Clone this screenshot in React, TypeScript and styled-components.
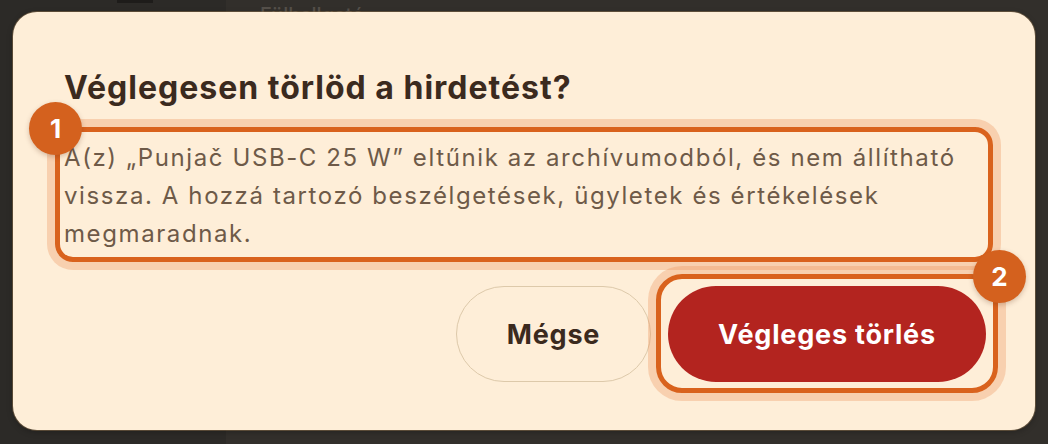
import React from "react";
import styled, { createGlobalStyle } from "styled-components";

const GlobalStyle = createGlobalStyle`
  * { box-sizing: border-box; }
  body {
    margin: 0;
    background: #302d29;
    font-family: Inter, "Noto Sans", sans-serif;
  }
`;

const Page = styled.div`
  position: relative;
  width: 1048px;
  height: 444px;
  overflow: hidden;
  display: grid;
  grid-template-columns: 226px 1fr;
  background: #322f2b;
`;

const Sidebar = styled.aside`
  background: #2c2a27;
  padding-left: 117px;
`;

const SidebarMark = styled.div`
  width: 36px;
  height: 3px;
  background: #1e1c1a;
`;

const Main = styled.main`
  padding: 3px 0 0 34px;
`;

const PageTitle = styled.h2`
  margin: 0;
  font-size: 20px;
  font-weight: 500;
  color: #55504a;
`;

const Overlay = styled.div`
  position: absolute;
  inset: 0;
  display: flex;
  padding: 12px 13px 14px 13px;
`;

const Dialog = styled.section`
  flex: 1;
  display: flex;
  flex-direction: column;
  background: #feeed8;
  border-radius: 24px;
  box-shadow: 0 0 0 1px rgba(150, 120, 80, 0.45), 0 2px 6px rgba(0, 0, 0, 0.25);
  padding: 58px 49px 48px 51px;
`;

const Title = styled.h1`
  margin: 0;
  font-size: 32px;
  line-height: 36px;
  font-weight: 700;
  color: #3b2a1e;
  letter-spacing: 1px;
`;

const Highlight = styled.div<{ $inset: string; $radius: number }>`
  position: relative;

  &::before {
    content: "";
    position: absolute;
    inset: ${(p) => p.$inset};
    border: 5px solid #d9621d;
    border-radius: ${(p) => p.$radius}px;
    box-shadow: 0 0 0 8px rgba(236, 140, 80, 0.3);
    pointer-events: none;
  }
`;

const Badge = styled.span`
  position: absolute;
  width: 53px;
  height: 53px;
  border-radius: 50%;
  background: #d4611e;
  color: #fff;
  font-size: 26px;
  font-weight: 700;
  display: flex;
  align-items: center;
  justify-content: center;
  box-shadow: 0 2px 5px rgba(90, 40, 10, 0.25);
  z-index: 2;
`;

const BadgeLeft = styled(Badge)`
  left: -35px;
  top: -37px;
`;

const BadgeRight = styled(Badge)`
  right: -40px;
  top: -36px;
`;

const Body = styled.p`
  margin: 0;
  font-size: 24px;
  line-height: 38px;
  letter-spacing: 1.6px;
  color: #6e5a48;
`;

const BodyWrap = styled(Highlight)`
  margin-top: 33px;
`;

const Actions = styled.div`
  margin-top: auto;
  display: flex;
  justify-content: flex-end;
  align-items: center;
  gap: 17px;
`;

const Button = styled.button<{ $danger?: boolean }>`
  height: 96px;
  border-radius: 48px;
  font-family: inherit;
  font-size: 27px;
  font-weight: 700;
  letter-spacing: 0.8px;
  cursor: pointer;
  border: ${(p) => (p.$danger ? "none" : "1.5px solid #ddc9aa")};
  background: ${(p) => (p.$danger ? "#b3241f" : "transparent")};
  color: ${(p) => (p.$danger ? "#ffffff" : "#3b2a1e")};
  width: ${(p) => (p.$danger ? "318px" : "195px")};
`;

export default function App() {
  return (
    <>
      <GlobalStyle />
      <Page>
        <Sidebar>
          <SidebarMark />
        </Sidebar>
        <Main>
          <PageTitle>Fülhallgató</PageTitle>
        </Main>
        <Overlay>
          <Dialog role="alertdialog" aria-labelledby="del-title">
            <Title id="del-title">Véglegesen törlöd a hirdetést?</Title>
            <BodyWrap $inset="-12px -7px -9px -9px" $radius={18}>
              <BadgeLeft>1</BadgeLeft>
              <Body>
                A(z) „Punjač USB-C 25 W” eltűnik az archívumodból, és nem
                állítható vissza. A hozzá tartozó beszélgetések, ügyletek és
                értékelések megmaradnak.
              </Body>
            </BodyWrap>
            <Actions>
              <Button>Mégse</Button>
              <Highlight $inset="-12px -12px -11px -12px" $radius={26}>
                <BadgeRight>2</BadgeRight>
                <Button $danger>Végleges törlés</Button>
              </Highlight>
            </Actions>
          </Dialog>
        </Overlay>
      </Page>
    </>
  );
}
